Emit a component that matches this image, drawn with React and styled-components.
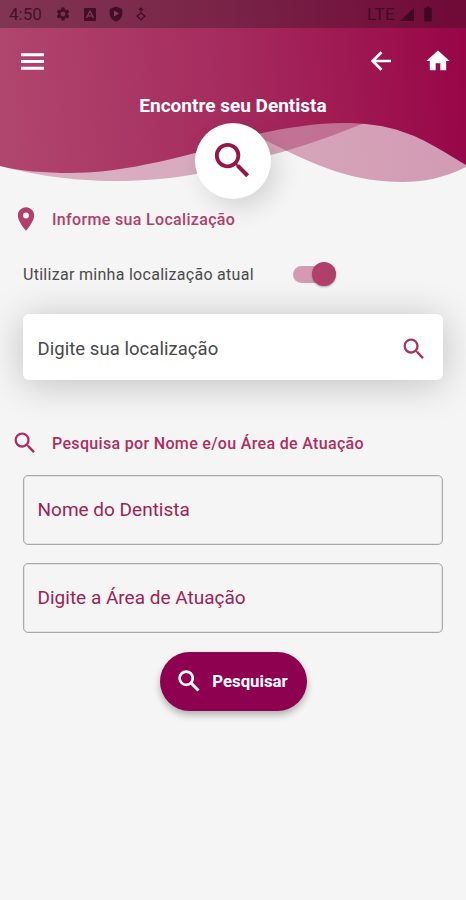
import React, { useState } from 'react'
import styled, { createGlobalStyle } from 'styled-components'
import {
  MdHome,
  MdPlace,
  MdSearch,
  MdSettings,
  MdBatteryFull,
} from 'react-icons/md'

const colors = {
  primary: '#8e0150',
  wine: '#96164a',
  rose: '#b13f6b',
  page: '#f5f5f5',
}

const GlobalStyle = createGlobalStyle`
  * {
    box-sizing: border-box;
  }
  body {
    margin: 0;
    background-color: ${colors.page};
    font-family: Roboto, sans-serif;
  }
  button {
    border: none;
    padding: 0;
    background: none;
    font-family: inherit;
    color: inherit;
  }
`

const Screen = styled.div`
  width: 466px;
  height: 900px;
  overflow: hidden;
  background-color: ${colors.page};
`
const Header = styled.header`
  position: relative;
  height: 205px;
  color: #fff;
`
const Waves = styled.svg`
  position: absolute;
  top: 0;
  left: 0;
  display: block;
`
const HeaderContent = styled.div`
  position: relative;
  display: flex;
  flex-direction: column;
  align-items: center;
`
const StatusBar = styled.div`
  display: flex;
  align-items: center;
  justify-content: space-between;
  width: 100%;
  height: 28px;
  padding: 0 29px 0 9px;
  background-color: rgba(20, 20, 20, 0.3);
  color: rgba(50, 8, 30, 0.8);
`
const StatusGroup = styled.div`
  display: flex;
  align-items: center;
  gap: ${(props) => props.$gap}px;
`
const StatusText = styled.span`
  font-size: 17px;
  line-height: 28px;
  letter-spacing: ${(props) => props.$spacing || 0}px;
`
const Toolbar = styled.div`
  display: flex;
  align-items: center;
  width: 100%;
  height: 66px;
  padding: 0 14px 0 21px;
`
const ToolButton = styled.button`
  display: flex;
  margin-left: ${(props) => props.$offset || 0};
`
const Title = styled.h1`
  margin: 0;
  padding-top: 1px;
  font-size: 19px;
  font-weight: 700;
  line-height: 22px;
`
const SearchBadge = styled.div`
  display: flex;
  align-items: center;
  justify-content: center;
  width: 76px;
  height: 76px;
  margin-top: 6px;
  padding: 0 2px 2px 0;
  border-radius: 50%;
  background-color: #fff;
  color: ${colors.wine};
  box-shadow: 7px 9px 25px rgba(0, 0, 0, 0.13);
`
const SectionTitle = styled.h2`
  display: flex;
  align-items: center;
  gap: ${(props) => props.$gap}px;
  height: 28px;
  margin: 0;
  padding-left: ${(props) => props.$left}px;
  color: ${(props) => props.$color};
  font-size: 16px;
  font-weight: 500;
  letter-spacing: 0.33px;
`
const SwitchRow = styled.label`
  display: flex;
  align-items: center;
  gap: 39px;
  height: 28px;
  margin-top: 27px;
  padding-left: 23px;
  color: #4a4a4a;
  font-size: 16px;
  letter-spacing: 0.29px;
`
const Track = styled.button`
  display: flex;
  align-items: center;
  justify-content: ${(props) => (props.$on ? 'flex-end' : 'flex-start')};
  width: 43px;
  height: 17px;
  border-radius: 9px;
  background-color: #d59ab2;
`
const Thumb = styled.span`
  width: 24px;
  height: 24px;
  flex: none;
  border-radius: 50%;
  background-color: ${colors.rose};
  box-shadow: 0 1px 2px rgba(0, 0, 0, 0.35);
`
const LocationField = styled.div`
  display: flex;
  align-items: center;
  justify-content: space-between;
  height: 66px;
  margin: 26px 23px 0;
  padding: 3px 15px 0 14.5px;
  border-radius: 6px;
  background-color: #fff;
  color: #484848;
  font-size: 18.5px;
  letter-spacing: 0.05px;
  box-shadow: 0 4px 38px rgba(0, 0, 0, 0.22);
`
const SearchSection = styled.section`
  margin-top: 49px;
`
const Field = styled.div`
  display: flex;
  align-items: center;
  height: 70px;
  margin: 18px 23px 0;
  padding: 0 13.5px 1px;
  border: 1px solid #a9a9a9;
  border-radius: 5px;
  color: #9c2355;
  font-size: 19px;
  box-shadow: inset 0 0 0 1px rgba(0, 0, 0, 0.07);
`
const SubmitButton = styled.button`
  display: flex;
  align-items: center;
  justify-content: center;
  gap: 12px;
  width: 147px;
  height: 59px;
  margin: 19px auto 0;
  padding-bottom: 1px;
  border-radius: 30px;
  background-color: ${colors.primary};
  color: #fff;
  font-size: 16.8px;
  font-weight: 700;
  box-shadow: 0 4px 7px rgba(0, 0, 0, 0.28);
`

function HeaderWaves() {
  return (
    <Waves width="466" height="185" viewBox="0 0 466 185">
      <defs>
        <linearGradient id="wine" gradientUnits="userSpaceOnUse" x1="0" y1="130" x2="466" y2="90">
          <stop offset="0" stopColor="#b0466e" />
          <stop offset="0.5" stopColor="#a52b5e" />
          <stop offset="1" stopColor="#980647" />
        </linearGradient>
      </defs>
      <path
        d="M0 0H466V80C425 96 390 114 362 124C330 137 298 148 271 155C240 164 190 181 115 181C70 181 30 174 0 166Z"
        fill="url(#wine)"
        opacity="0.38"
      />
      <path
        d="M0 0H466V167C445 178 422 182 403 182C355 182 320 167 287 151C250 133 215 113 170 110C100 105 50 130 0 150Z"
        fill="url(#wine)"
        opacity="0.38"
      />
      <path
        d="M0 0H466V165C438 148 422 138 403 132C385 125 362 123 344 123C316 123 285 128 262 133C240 139 217 147 195 153C160 162 115 173 70 173C45 173 20 171 0 166Z"
        fill="url(#wine)"
      />
    </Waves>
  )
}

function MenuIcon() {
  return (
    <svg width="23" height="17" viewBox="0 0 23 17">
      <path d="M0 1.750H23M0 8.500H23M0 15.250H23" stroke="currentColor" strokeWidth="2.800" />
    </svg>
  )
}

function BackIcon() {
  return (
    <svg width="20" height="20" viewBox="0 0 20 20" fill="none" stroke="currentColor">
      <path d="M20 10H2.500M10.500 1.200 1.700 10l8.800 8.800" strokeWidth="2.700" />
    </svg>
  )
}

function BoldSearchIcon() {
  return (
    <svg width="22" height="22" viewBox="0 0 22 22" fill="none" stroke="currentColor">
      <circle cx="8.200" cy="8.200" r="6.600" strokeWidth="2.700" />
      <path d="M13 13l7.500 7.500" strokeWidth="3" />
    </svg>
  )
}

function ShieldIcon() {
  return (
    <svg width="14" height="16" viewBox="0 0 14 16">
      <path
        d="M7 .5 13.300 3v4.400c0 3.700-2.600 6.700-6.300 8.100C3.300 14.100.7 11.100.7 7.400V3Z"
        fill="currentColor"
      />
      <path d="M5 4.600 10 7.600 5 10.600Z" fill="#8c3b60" />
    </svg>
  )
}

function CardIcon() {
  return (
    <svg width="12" height="13" viewBox="0 0 12 13">
      <rect width="12" height="13" rx="1" fill="currentColor" />
      <path d="M2.500 10 6 3l3.500 7M4 8h4" fill="none" stroke="#8c3b60" strokeWidth="1.200" />
    </svg>
  )
}

function DropIcon() {
  return (
    <svg width="10" height="14" viewBox="0 0 10 14" fill="none" stroke="currentColor">
      <path d="M5 1v5M3 3l2-2 2 2M1 9l4-3 4 3-4 4Z" strokeWidth="1.200" />
    </svg>
  )
}

function SignalIcon() {
  return (
    <svg width="14" height="13" viewBox="0 0 14 13">
      <path d="M14 0V13H0Z" fill="currentColor" />
    </svg>
  )
}

export default function App() {
  const [useCurrent, setUseCurrent] = useState(true)

  return (
    <Screen>
      <GlobalStyle />
      <Header>
        <HeaderWaves />
        <HeaderContent>
          <StatusBar>
            <StatusGroup $gap={13}>
              <StatusText>4:50</StatusText>
              <MdSettings size={16} />
              <CardIcon />
              <ShieldIcon />
              <DropIcon />
            </StatusGroup>
            <StatusGroup $gap={5}>
              <StatusText $spacing={0.4}>LTE</StatusText>
              <SignalIcon />
              <MdBatteryFull size={18} />
            </StatusGroup>
          </StatusBar>
          <Toolbar>
            <ToolButton>
              <MenuIcon />
            </ToolButton>
            <ToolButton $offset="auto">
              <BackIcon />
            </ToolButton>
            <ToolButton $offset="33px">
              <MdHome size={28} />
            </ToolButton>
          </Toolbar>
          <Title>Encontre seu Dentista</Title>
          <SearchBadge>
            <MdSearch size={47} />
          </SearchBadge>
        </HeaderContent>
      </Header>
      <main>
        <section>
          <SectionTitle $left={12} $gap={12} $color={colors.rose}>
            <MdPlace size={28} />
            Informe sua Localização
          </SectionTitle>
          <SwitchRow>
            Utilizar minha localização atual
            <Track $on={useCurrent} onClick={() => setUseCurrent(!useCurrent)}>
              <Thumb />
            </Track>
          </SwitchRow>
          <LocationField>
            Digite sua localização
            <MdSearch size={28} color="#a8325f" />
          </LocationField>
        </section>
        <SearchSection>
          <SectionTitle $left={11} $gap={13} $color="#ac2e60">
            <MdSearch size={28} />
            Pesquisa por Nome e/ou Área de Atuação
          </SectionTitle>
          <Field>Nome do Dentista</Field>
          <Field>Digite a Área de Atuação</Field>
          <SubmitButton>
            <BoldSearchIcon />
            Pesquisar
          </SubmitButton>
        </SearchSection>
      </main>
    </Screen>
  )
}
